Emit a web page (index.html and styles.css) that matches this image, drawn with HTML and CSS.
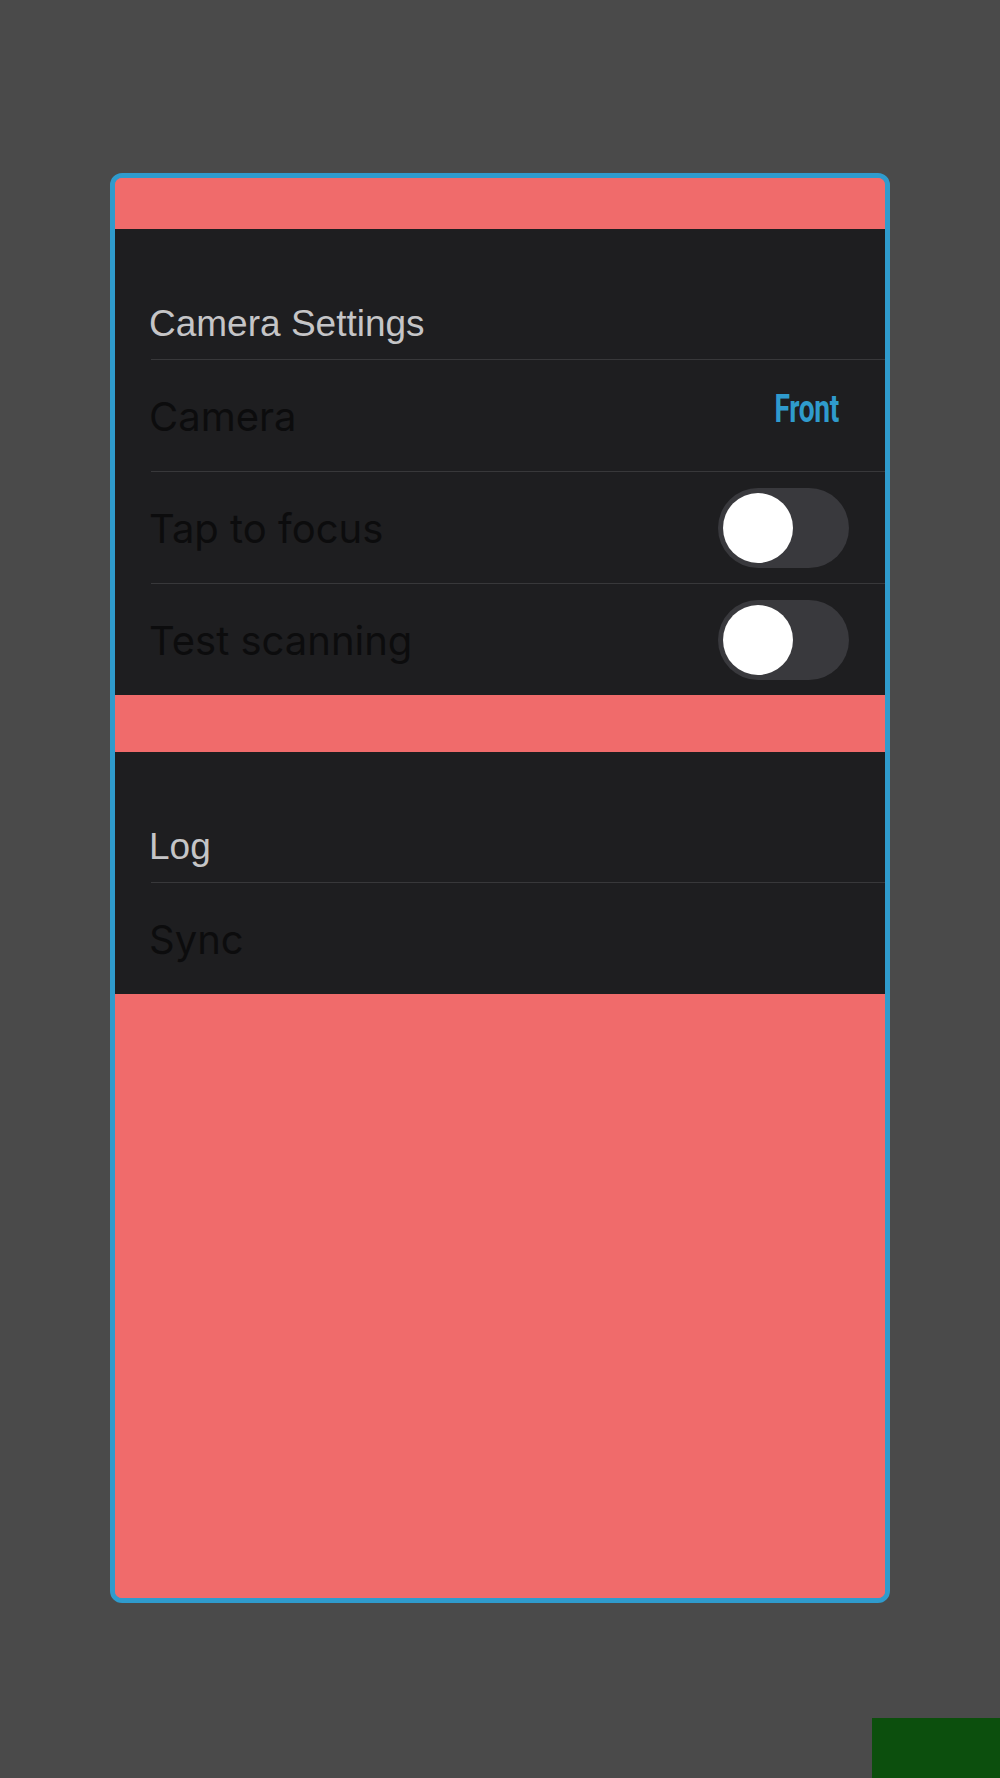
FILE: index.html
```html
<!DOCTYPE html>
<html lang="en">
<head>
<meta charset="utf-8">
<title>Settings</title>
<link rel="stylesheet" href="styles.css">
</head>
<body>
<div class="page">
  <div class="card">
    <div class="band band-top"></div>
    <section class="group">
      <div class="group-header">Camera Settings</div>
      <div class="row">
        <span class="label">Camera</span>
        <span class="value">Front</span>
      </div>
      <div class="row">
        <span class="label">Tap to focus</span>
        <span class="toggle"><span class="knob"></span></span>
      </div>
      <div class="row">
        <span class="label">Test scanning</span>
        <span class="toggle"><span class="knob"></span></span>
      </div>
    </section>
    <div class="band band-gap"></div>
    <section class="group">
      <div class="group-header">Log</div>
      <div class="row">
        <span class="label">Sync</span>
      </div>
    </section>
    <div class="band band-fill"></div>
  </div>
  <div class="footer">
    <div class="corner-box"></div>
  </div>
</div>
</body>
</html>
```

FILE: styles.css
```css
html, body {
  margin: 0;
  padding: 0;
  background: #4a4a4a;
}
body {
  font-family: "Liberation Sans", Arial, sans-serif;
}
.page {
  width: 1000px;
  height: 1778px;
  padding-top: 173px;
  box-sizing: border-box;
  display: flex;
  flex-direction: column;
}
.card {
  margin-left: 110px;
  width: 780px;
  height: 1430px;
  box-sizing: border-box;
  border: 5px solid #2f9bcd;
  border-radius: 12px;
  overflow: hidden;
  background: #f06b6b;
  display: flex;
  flex-direction: column;
}
.band {
  background: #f06b6b;
}
.band-top {
  height: 51px;
}
.band-gap {
  height: 57px;
}
.band-fill {
  flex: 1;
}
.group {
  background: #1e1e20;
  display: flex;
  flex-direction: column;
}
.group-header {
  height: 130px;
  box-sizing: border-box;
  display: flex;
  align-items: flex-end;
  padding: 0 0 17px 34px;
  font-size: 37px;
  line-height: 37px;
  color: #c5c5c7;
}
.row {
  margin-left: 36px;
  height: 112px;
  box-sizing: border-box;
  border-top: 1px solid #38383a;
  padding-right: 36px;
  display: flex;
  align-items: center;
  justify-content: space-between;
}
.label {
  font-family: Inter, "Liberation Sans", sans-serif;
  font-size: 40px;
  line-height: 48px;
  color: #0c0c0d;
  margin-left: -2px;
  margin-top: 2px;
}
.value {
  font-family: Roboto, "Liberation Sans", sans-serif;
  font-weight: 700;
  font-size: 38px;
  color: #2f9bcd;
  margin-right: 10px;
  margin-bottom: 14px;
  transform: scaleX(0.74);
  transform-origin: right center;
  letter-spacing: -0.5px;
}
.toggle {
  width: 131px;
  height: 80px;
  border-radius: 40px;
  background: #39393d;
  box-sizing: border-box;
  padding: 5px;
  display: flex;
  align-items: center;
}
.knob {
  width: 70px;
  height: 70px;
  border-radius: 50%;
  background: #ffffff;
}
.footer {
  margin-top: 115px;
  display: flex;
  justify-content: flex-end;
}
.corner-box {
  width: 128px;
  height: 60px;
  background: #0c4f0d;
}
```
